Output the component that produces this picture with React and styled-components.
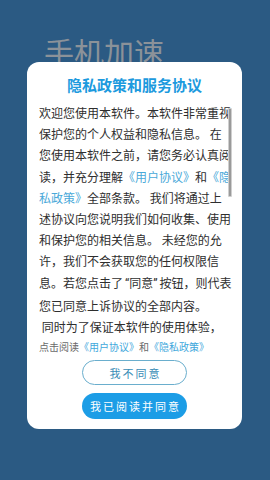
import React from "react";
import styled, { createGlobalStyle } from "styled-components";

const Global = createGlobalStyle`
  html, body { margin: 0; padding: 0; }
  body {
    width: 270px;
    height: 480px;
    overflow: hidden;
    background: #2b5a83;
    font-family: "Noto Sans CJK SC", Roboto, sans-serif;
  }
`;

const Page = styled.div`
  width: 270px;
  height: 480px;
  background: #2b5a83;
  padding: 36px 0 0 44px;
  box-sizing: border-box;
`;

const Heading = styled.h1`
  margin: 0;
  font-size: 30px;
  line-height: 30px;
  font-weight: 400;
  color: #8b9299;
  font-family: "Noto Sans CJK SC", sans-serif;
`;

const Overlay = styled.div`
  position: fixed;
  inset: 0;
  display: flex;
  justify-content: center;
  align-items: flex-start;
  padding-top: 62px;
  box-sizing: border-box;
`;

const Dialog = styled.div`
  width: 215px;
  margin-left: -1px;
  background: #ffffff;
  border-radius: 12px;
  padding: 13px 0 10px;
  box-sizing: border-box;
  display: flex;
  flex-direction: column;
  align-items: center;
`;

const Title = styled.h2`
  margin: 0;
  font-size: 15px;
  line-height: 20px;
  font-weight: 700;
  color: #1c9ade;
  text-align: center;
`;

const ScrollBox = styled.div`
  position: relative;
  align-self: flex-start;
  margin: 7px 0 0 12px;
  width: 194px;
  height: 233px;
  overflow: hidden;
`;

const Body = styled.p`
  margin: 0;
  font-size: 12px;
  line-height: 21.2px;
  color: #2e2e2e;
`;

const Quote = styled.span`
  font-family: Roboto, sans-serif;
  margin: ${(p) => (p.$open ? "0 0 0 2px" : "0 2px 0 0")};
`;

const Link = styled.span`
  color: ${(p) => p.$color || "#4aa9d9"};
`;

const Thumb = styled.div`
  position: absolute;
  left: 189px;
  top: 6px;
  width: 2px;
  height: 87px;
  background: #9a9a9a;
  border: 0.5px solid #cfcfcf;
  border-radius: 1px;
`;

const ReadLine = styled.div`
  align-self: flex-start;
  margin: 5px 0 0 12px;
  font-size: 10px;
  line-height: 14px;
  color: #6a6a6a;
`;

const Button = styled.button`
  display: flex;
  align-items: center;
  justify-content: center;
  width: 105px;
  height: ${(p) => (p.$primary ? "26px" : "25px")};
  margin-top: ${(p) => (p.$primary ? "8px" : "6px")};
  border-radius: 13px;
  box-sizing: border-box;
  border: ${(p) => (p.$primary ? "none" : "1.5px solid #6aaecd")};
  background: ${(p) => (p.$primary ? "#1c9de6" : "#ffffff")};
  color: ${(p) => (p.$primary ? "#ffffff" : "#3a8db6")};
  font-family: "Noto Sans CJK SC", sans-serif;
  font-size: 11px;
  line-height: 14px;
  letter-spacing: 2px;
  padding: 0 0 0 2px;
  cursor: pointer;
`;

export default function App() {
  return (
    <>
      <Global />
      <Page>
        <Heading>手机加速</Heading>
      </Page>
      <Overlay>
        <Dialog>
          <Title>隐私政策和服务协议</Title>
          <ScrollBox>
            <Body>
              欢迎您使用本软件。本软件非常重视保护您的个人权益和隐私信息。 在您使用本软件之前，请您务必认真阅读，并充分理解
              <Link>《用户协议》</Link>和<Link>《隐私政策》</Link>
              全部条款。 我们将通过上述协议向您说明我们如何收集、使用和保护您的相关信息。 未经您的允许，我们不会获取您的任何权限信息。若您点击了
              <Quote $open>“</Quote>同意<Quote>”</Quote>
              按钮，则代表您已同意上诉协议的全部内容。
            </Body>
            <Body>{"\u00a0"}同时为了保证本软件的使用体验，</Body>
            <Thumb />
          </ScrollBox>
          <ReadLine>
            点击阅读<Link $color="#3fa8dc">《用户协议》</Link>和
            <Link $color="#3fa8dc">《隐私政策》</Link>
          </ReadLine>
          <Button type="button">我不同意</Button>
          <Button type="button" $primary>
            我已阅读并同意
          </Button>
        </Dialog>
      </Overlay>
    </>
  );
}
